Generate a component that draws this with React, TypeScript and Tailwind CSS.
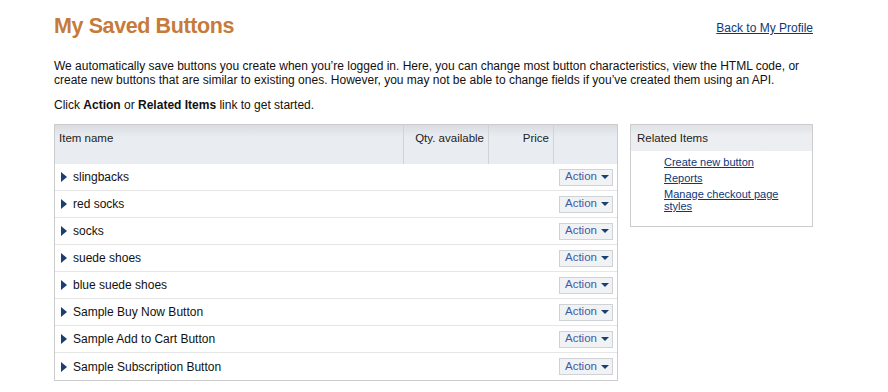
import React from "react";

const items = [
  "slingbacks",
  "red socks",
  "socks",
  "suede shoes",
  "blue suede shoes",
  "Sample Buy Now Button",
  "Sample Add to Cart Button",
  "Sample Subscription Button",
];

function Row({ name }: { name: string }) {
  return (
    <div className="flex h-[27px] items-center border-b border-[#e6e6e6] last:border-b-0">
      <div className="flex flex-1 items-center pl-[6px]">
        <svg width="6" height="10" viewBox="0 0 6 10" className="block">
          <path d="M0 0 L6 5 L0 10 Z" fill="#1c3f73" />
        </svg>
        <span className="ml-[6px] text-[12px] text-[#111]">{name}</span>
      </div>
      <div className="w-[64px] flex justify-start pl-[6px]">
        <div className="flex h-[17px] w-[54px] items-center border border-[#cfd2d6] bg-[#f1f2f4] pl-[5px]">
          <span className="text-[11.5px] leading-none text-[#3e5ca8]">Action</span>
          <svg width="8" height="4" viewBox="0 0 8 4" className="ml-[4px] block">
            <path d="M0 0 L8 0 L4 4 Z" fill="#1c3f73" />
          </svg>
        </div>
      </div>
    </div>
  );
}

export default function App() {
  return (
    <div
      className="min-h-[392px] w-[888px] bg-white pl-[54px] text-[#111]"
      style={{ fontFamily: '"Liberation Sans", Arial, sans-serif' }}
    >
      <div className="flex w-[759px] items-start justify-between pt-[12px]">
        <h1 className="text-[21.5px] font-bold leading-[28px] tracking-[-0.4px] text-[#c67b3a]">
          My Saved Buttons
        </h1>
        <a className="mt-[9px] text-[12px] leading-[14px] text-[#0d3878] underline" href="#">
          Back to My Profile
        </a>
      </div>
      <p className="mt-[19px] w-[770px] text-[12px] leading-[14px]">
        We automatically save buttons you create when you’re logged in. Here, you can change most button characteristics, view the HTML code, or create new buttons that are similar to existing ones. However, you may not be able to change fields if you’ve created them using an API.
      </p>
      <p className="mt-[11px] text-[12px] leading-[14px]">
        Click <b>Action</b> or <b>Related Items</b> link to get started.
      </p>
      <div className="mt-[12px] flex items-start gap-[12px]">
        <div className="w-[564px] border border-[#cccccc]">
          <div className="flex h-[39px] bg-linear-to-b from-[#d9dde2] via-[#e9ecf0] via-30% to-[#e9ecf0] text-[11.5px] text-[#222]">
            <div className="flex-1 pl-[4px] pt-[5px]">Item name</div>
            <div className="w-[85px] border-l border-[#d0d4d9] pr-[4px] pt-[5px] text-right">Qty. available</div>
            <div className="w-[65px] border-l border-[#d0d4d9] pr-[4px] pt-[5px] text-right">Price</div>
            <div className="w-[64px] border-l border-[#d0d4d9]"></div>
          </div>
          {items.map((n) => (
            <Row key={n} name={n} />
          ))}
        </div>
        <div className="w-[183px] border border-[#cccccc] pb-[14px]">
          <div className="h-[26px] bg-linear-to-b from-[#dfe2e6] via-[#eceef1] via-40% to-[#eceef1] pl-[6px] pt-[6px] text-[11.5px] leading-[14px] text-[#222]">
            Related Items
          </div>
          <ul className="mt-[5px] space-y-[4px] pl-[33px] pr-[20px] text-[11px] leading-[12px]">
            <li><a href="#" className="text-[#0d3878] underline">Create new button</a></li>
            <li><a href="#" className="text-[#0d3878] underline">Reports</a></li>
            <li><a href="#" className="text-[#0d3878] underline">Manage checkout page styles</a></li>
          </ul>
        </div>
      </div>
    </div>
  );
}
